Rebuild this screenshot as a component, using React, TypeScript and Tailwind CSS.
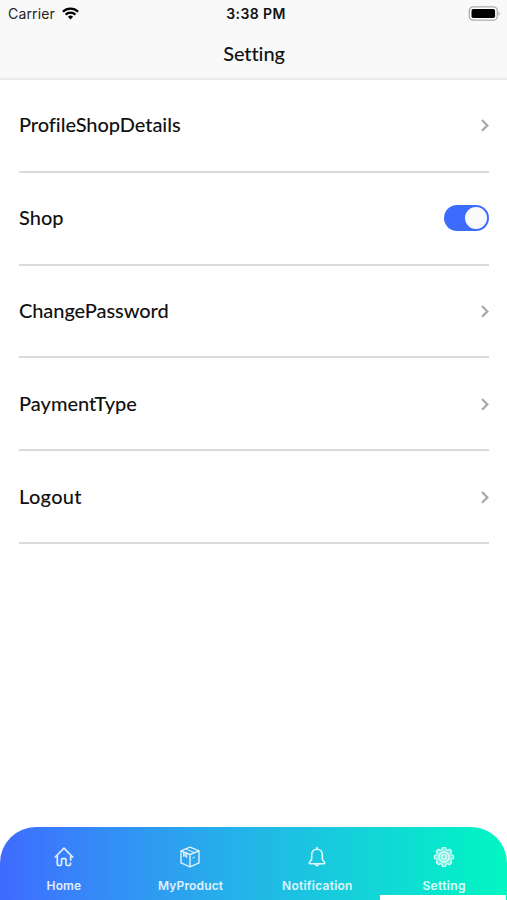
import { useState } from 'react';

interface Item {
  label: string;
  tracking: string;
  toggle?: boolean;
}

interface Tab {
  label: string;
  tracking: string;
  icon: React.ReactNode;
}

const items: Item[] = [
  { label: 'ProfileShopDetails', tracking: 'tracking-[-0.05px]' },
  { label: 'Shop', tracking: 'tracking-[0px]', toggle: true },
  { label: 'ChangePassword', tracking: 'tracking-[-0.08px]' },
  { label: 'PaymentType', tracking: 'tracking-[0px]' },
  { label: 'Logout', tracking: 'tracking-[0.3px]' },
];

const HomeIcon = () => (
  <svg width="22" height="22" viewBox="0 0 22 22" fill="none" stroke="currentColor" strokeWidth="1.7" strokeLinecap="round" strokeLinejoin="round">
    <path d="M2.3 11 11 2.2l8.7 8.8" />
    <path d="M4.3 10v8.1c0 .9.5 1.4 1.3 1.4h1.6c.8 0 1.3-.5 1.3-1.4v-4.7c0-.5.3-.8.8-.8h2.9c.5 0 .8.3.8.8v4.7c0 .9.5 1.4 1.3 1.4h1.8c.9 0 1.4-.5 1.4-1.4v-1M17.7 10v4" />
  </svg>
);

const BoxIcon = () => (
  <svg className="-ml-px" width="22" height="22" viewBox="0 0 22 22" fill="none" stroke="currentColor" strokeWidth="1.4" strokeLinejoin="round">
    <path d="M11 1.2 20 4.800v12.100l-9 3.900-9-3.900V4.800z" />
    <path d="M2 4.8l9 3.7 9-3.7M11 8.5v12.3" />
    <path d="M6.4 3l9 3.6" strokeWidth="1" />
    <path d="M4.6 6v4.4L6 9.6l1.7 2V7.2z" fill="currentColor" fillOpacity="0.6" strokeWidth="1" />
    <path d="M13.6 11.9l2-.9" strokeWidth="1.1" />
  </svg>
);

const BellIcon = () => (
  <svg width="22" height="22" viewBox="0 0 22 22" fill="none" stroke="currentColor" strokeWidth="1.6" strokeLinecap="round" strokeLinejoin="round">
    <path d="M11 1.5v1.8M11 3.3c-3.3 0-5.3 2.4-5.3 5.5v3.7c0 1.8-1.1 2.6-2.2 3.7-.6.7-.2 1.5.7 1.5h13.6c.9 0 1.3-.8.7-1.5-1.1-1.1-2.2-1.9-2.2-3.7V8.8c0-3.1-2-5.5-5.3-5.5z" />
    <path d="M9.5 18.6c.3.9.8 1.2 1.5 1.2s1.2-.3 1.5-1.2" />
  </svg>
);

const GearIcon = () => (
  <svg width="22" height="22" viewBox="0 0 22 22" fill="none" stroke="currentColor" strokeLinejoin="round">
    <path
      d="M9.5 1.5h3l.6 2.2 1.4.6 2-1.1 2.3 2.3-1.1 2 .6 1.4 2.2.6v3l-2.2.6-.6 1.4 1.1 2-2.3 2.3-2-1.1-1.4.6-.6 2.2h-3l-.6-2.2-1.4-.6-2 1.1-2.3-2.3 1.1-2-.6-1.4-2.2-.6v-3l2.2-.6.6-1.4-1.1-2 2.3-2.3 2 1.1 1.4-.6z"
      fill="currentColor"
      fillOpacity="0.5"
      strokeWidth="1.2"
    />
    <circle cx="11" cy="11" r="5" strokeWidth="1.3" />
    <circle cx="11" cy="11" r="2.4" strokeWidth="1.2" />
  </svg>
);

const tabs: Tab[] = [
  { label: 'Home', tracking: 'tracking-[0.1px]', icon: <HomeIcon /> },
  { label: 'MyProduct', tracking: 'tracking-[0.15px]', icon: <BoxIcon /> },
  { label: 'Notification', tracking: 'tracking-[0.25px]', icon: <BellIcon /> },
  { label: 'Setting', tracking: 'tracking-[0.35px]', icon: <GearIcon /> },
];

function StatusBar() {
  return (
    <div className="grid h-[27px] grid-cols-3 items-center pr-[7px] pl-2 font-['Inter',sans-serif]">
      <div className="flex items-center gap-[7px] text-[14px] tracking-[0.15px] text-[#222]">
        <span>Carrier</span>
        <svg width="17" height="13" viewBox="0 0 17 13" fill="none" stroke="#000" strokeWidth="2.2">
          <path d="M.9 4.8a10.8 10.8 0 0 1 15.2 0" />
          <path d="M3.6 7.6a7 7 0 0 1 9.8 0" />
          <path d="M8.5 12.4 5.9 9.8a3.7 3.7 0 0 1 5.2 0z" fill="#000" stroke="none" />
        </svg>
      </div>
      <p className="pl-[4px] text-center text-[14px] font-semibold tracking-[0.4px] whitespace-nowrap text-[#111]">3:38 PM</p>
      <svg className="justify-self-end" width="32" height="15" viewBox="0 0 32 15">
        <rect x="1.3" y=".8" width="28" height="13.4" rx="4" fill="#fff" stroke="#aaa" strokeWidth="1.3" />
        <rect x="3.5" y="3" width="23.6" height="9" rx="1.8" fill="#000" />
        <path d="M30.6 5.4c1.4.5 1.4 3.7 0 4.2z" fill="#999" />
      </svg>
    </div>
  );
}

export default function App() {
  const [shopOpen, setShopOpen] = useState(true);

  return (
    <main className="flex h-[900px] w-full flex-col overflow-hidden bg-white">
      <header className="h-20 shrink-0 border-b-2 border-[#ebebeb] bg-[#f9f9f9]">
        <StatusBar />
        <h1 className="mt-3 pl-px text-center font-['Lato',sans-serif] text-[20px] leading-7 font-medium tracking-[-0.1px] text-[#111]">Setting</h1>
      </header>

      <ul className="mr-[18px] ml-[19px] flex-1">
        {items.map((item) => (
          <li key={item.label} className="flex h-[92.8px] items-center justify-between border-b-2 border-[#dadada]">
            <span className={`pb-[2px] font-['Lato',sans-serif] text-[20px] leading-7 font-medium text-[#111] ${item.tracking}`}>{item.label}</span>
            {item.toggle ? (
              <button
                onClick={() => setShopOpen(!shopOpen)}
                className={`flex h-[26px] w-[45px] items-center rounded-full p-[2px] ${shopOpen ? 'justify-end bg-[#3d6bfb]' : 'justify-start bg-gray-300'}`}
              >
                <span className="size-[22px] rounded-full bg-[#fafafa]" />
              </button>
            ) : (
              <svg className="-mr-px" width="10" height="14" viewBox="0 0 10 14" fill="none" stroke="#a9a9a9" strokeWidth="2.2">
                <path d="M2 2 7.4 7.4 2 12.8" />
              </svg>
            )}
          </li>
        ))}
      </ul>

      <nav className="relative grid h-[73px] shrink-0 grid-cols-4 rounded-t-[36px] bg-linear-to-r from-[#3f6aff] to-[#02f7c1]">
        {tabs.map((tab) => (
          <button key={tab.label} className="flex flex-col items-center pt-[19px] pl-px text-white/85">
            {tab.icon}
            <span className={`mt-[10px] font-['Inter',sans-serif] text-[12px] leading-4 font-semibold ${tab.tracking}`}>{tab.label}</span>
          </button>
        ))}
        <div className="absolute right-px bottom-0 h-[5px] w-[126px] bg-white" />
      </nav>
    </main>
  );
}
